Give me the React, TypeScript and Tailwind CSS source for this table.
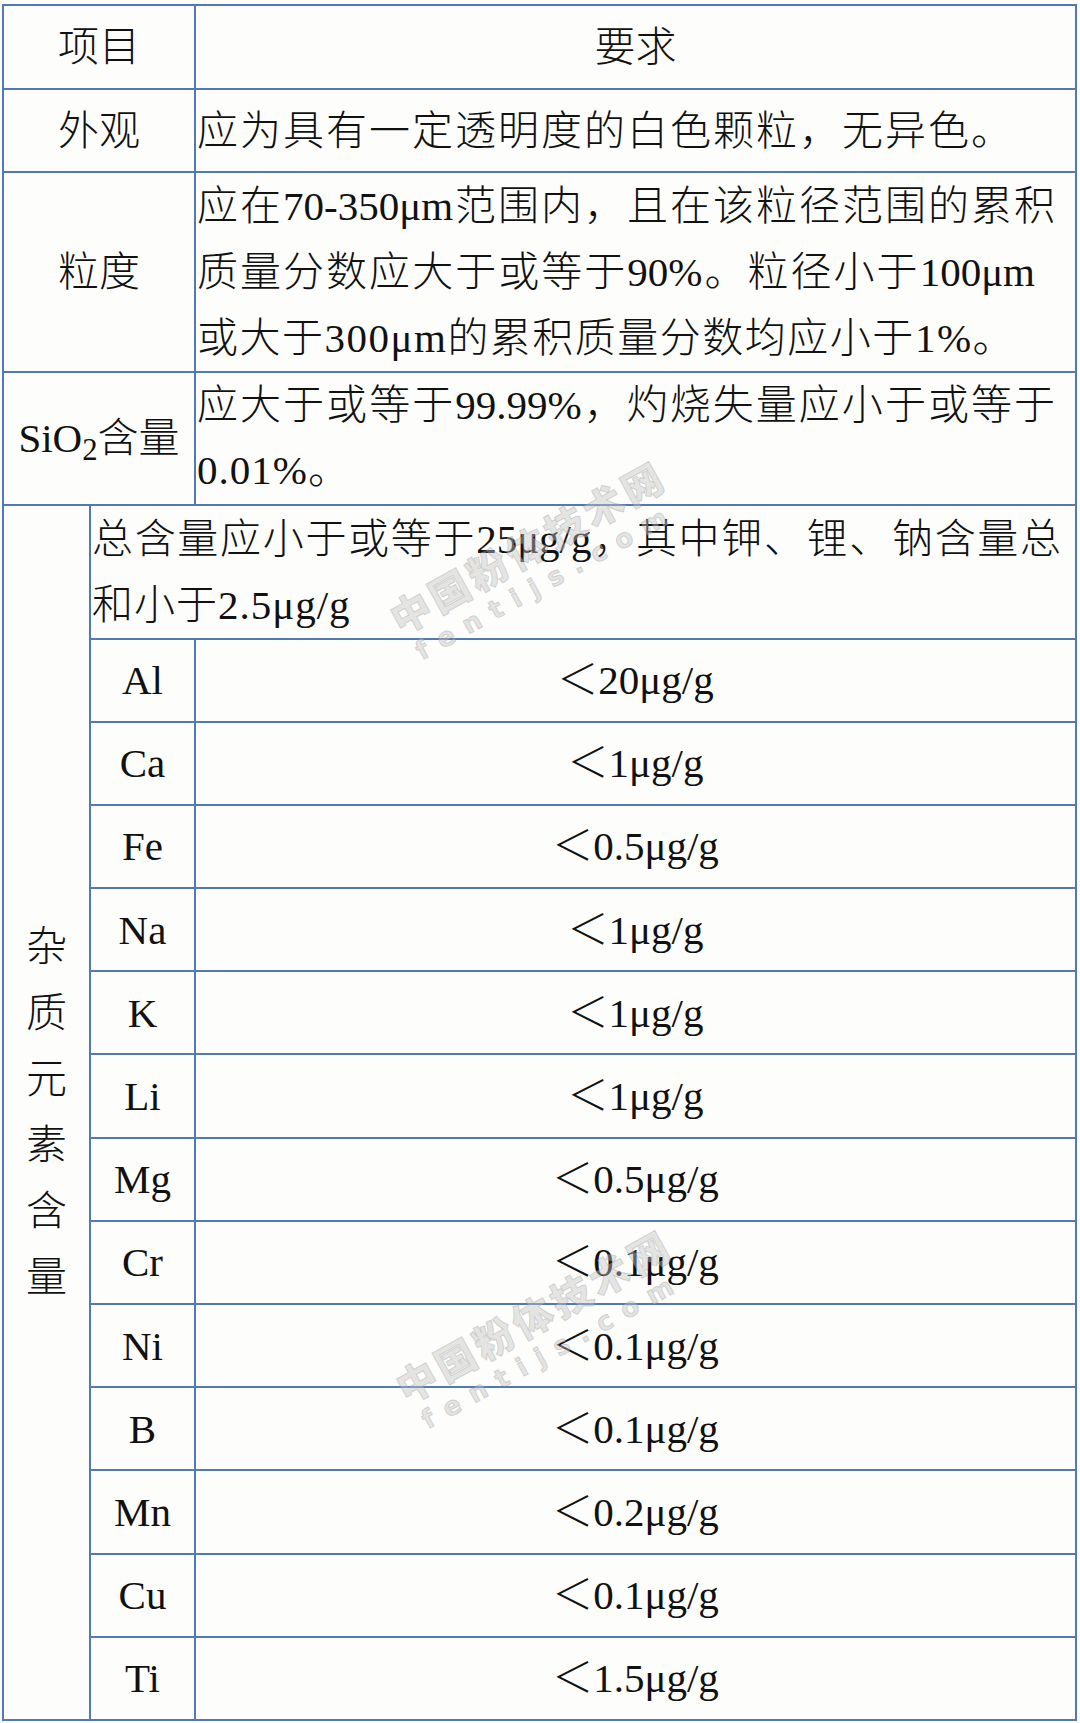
import type { ReactNode } from 'react';

const LINE = 'border-2 border-[#5279b4]';

const elements: [string, string][] = [
  ['Al', '20'],
  ['Ca', '1'],
  ['Fe', '0.5'],
  ['Na', '1'],
  ['K', '1'],
  ['Li', '1'],
  ['Mg', '0.5'],
  ['Cr', '0.1'],
  ['Ni', '0.1'],
  ['B', '0.1'],
  ['Mn', '0.2'],
  ['Cu', '0.1'],
  ['Ti', '1.5'],
];

// latin runs keep the regular serif weight
function L({ children }: { children: ReactNode }) {
  return <span className="font-normal">{children}</span>;
}

function Watermark({ className }: { className: string }) {
  return (
    <div
      className={`pointer-events-none absolute -translate-x-1/2 -translate-y-1/2 rotate-[-29deg] select-none text-center text-[#c4c4c4]/45 [-webkit-text-stroke:1px_rgba(150,150,150,0.35)] ${className}`}
    >
      <div className="whitespace-nowrap font-[family-name:'Noto_Sans_CJK_SC',sans-serif] text-[40px] font-black leading-[48px] tracking-[4px]">
        中国粉体技术网
      </div>
      <div className="whitespace-nowrap font-[family-name:'DejaVu_Sans',sans-serif] text-[26px] font-bold leading-[32px] tracking-[12px]">
        fentijs.com
      </div>
    </div>
  );
}

export default function App() {
  return (
    <div className="relative min-h-screen bg-[#fdfefc] pl-[2px] pt-[4px] font-[family-name:'Liberation_Serif','Noto_Sans_CJK_SC',serif] text-[41px] font-light leading-[66px] text-[#111]">
      <table className="w-[1075px] table-fixed border-collapse">
        <colgroup>
          <col className="w-[87px]" />
          <col className="w-[105px]" />
          <col />
        </colgroup>
        <tbody>
          {/* header */}
          <tr className="h-[84px]">
            <td colSpan={2} className={`${LINE} text-center`}>
              项目
            </td>
            <td className={`${LINE} text-center`}>要求</td>
          </tr>

          <tr className="h-[83px]">
            <td colSpan={2} className={`${LINE} text-center`}>
              外观
            </td>
            <td className={`${LINE} pl-[1px] pr-[20px] tracking-[2px]`}>应为具有一定透明度的白色颗粒，无异色。</td>
          </tr>

          <tr className="h-[200px]">
            <td colSpan={2} className={`${LINE} text-center`}>
              粒度
            </td>
            <td className={`${LINE} pl-[1px] pr-[20px]`}>
              <div className="text-justify [text-align-last:justify]">
                应在<L>70-350μm</L>范围内，且在该粒径范围的累积
              </div>
              <div className="pr-[20px] text-justify [text-align-last:justify]">
                质量分数应大于或等于<L>90%</L>。粒径小于<L>100μm</L>
              </div>
              <div className="tracking-[1.5px]">
                或大于<L>300μm</L>的累积质量分数均应小于<L>1%</L>。
              </div>
            </td>
          </tr>

          <tr className="h-[132.5px]">
            <td colSpan={2} className={`${LINE} text-center`}>
              <L>
                SiO<sub>2</sub>
              </L>
              含量
            </td>
            <td className={`${LINE} pl-[1px] pr-[20px] leading-[65px]`}>
              <div className="text-justify [text-align-last:justify]">
                应大于或等于<L>99.99%</L>，灼烧失量应小于或等于
              </div>
              <div className="tracking-[1px]">
                <L>0.01%</L>。
              </div>
            </td>
          </tr>

          <tr className="h-[134px]">
            <td rowSpan={14} className={`${LINE} text-center`}>
              <div className="mx-auto w-[1em]">杂质元素含量</div>
            </td>
            <td colSpan={2} className={`${LINE} pl-[1px] pr-[14px]`}>
              <div className="text-justify [text-align-last:justify]">
                总含量应小于或等于<L>25μg/g</L>，其中钾、锂、钠含量总
              </div>
              <div className="tracking-[1px]">
                和小于<L>2.5μg/g</L>
              </div>
            </td>
          </tr>

          {elements.map(([el, val]) => (
            <tr key={el} className="h-[83.2px]">
              <td className={`${LINE} text-center font-normal`}>{el}</td>
              <td className={`${LINE} text-center`}>
                ＜<L>{val}μg/g</L>
              </td>
            </tr>
          ))}
        </tbody>
      </table>

      <Watermark className="left-[535px] top-[560px]" />
      <Watermark className="left-[541px] top-[1329px]" />
    </div>
  );
}
